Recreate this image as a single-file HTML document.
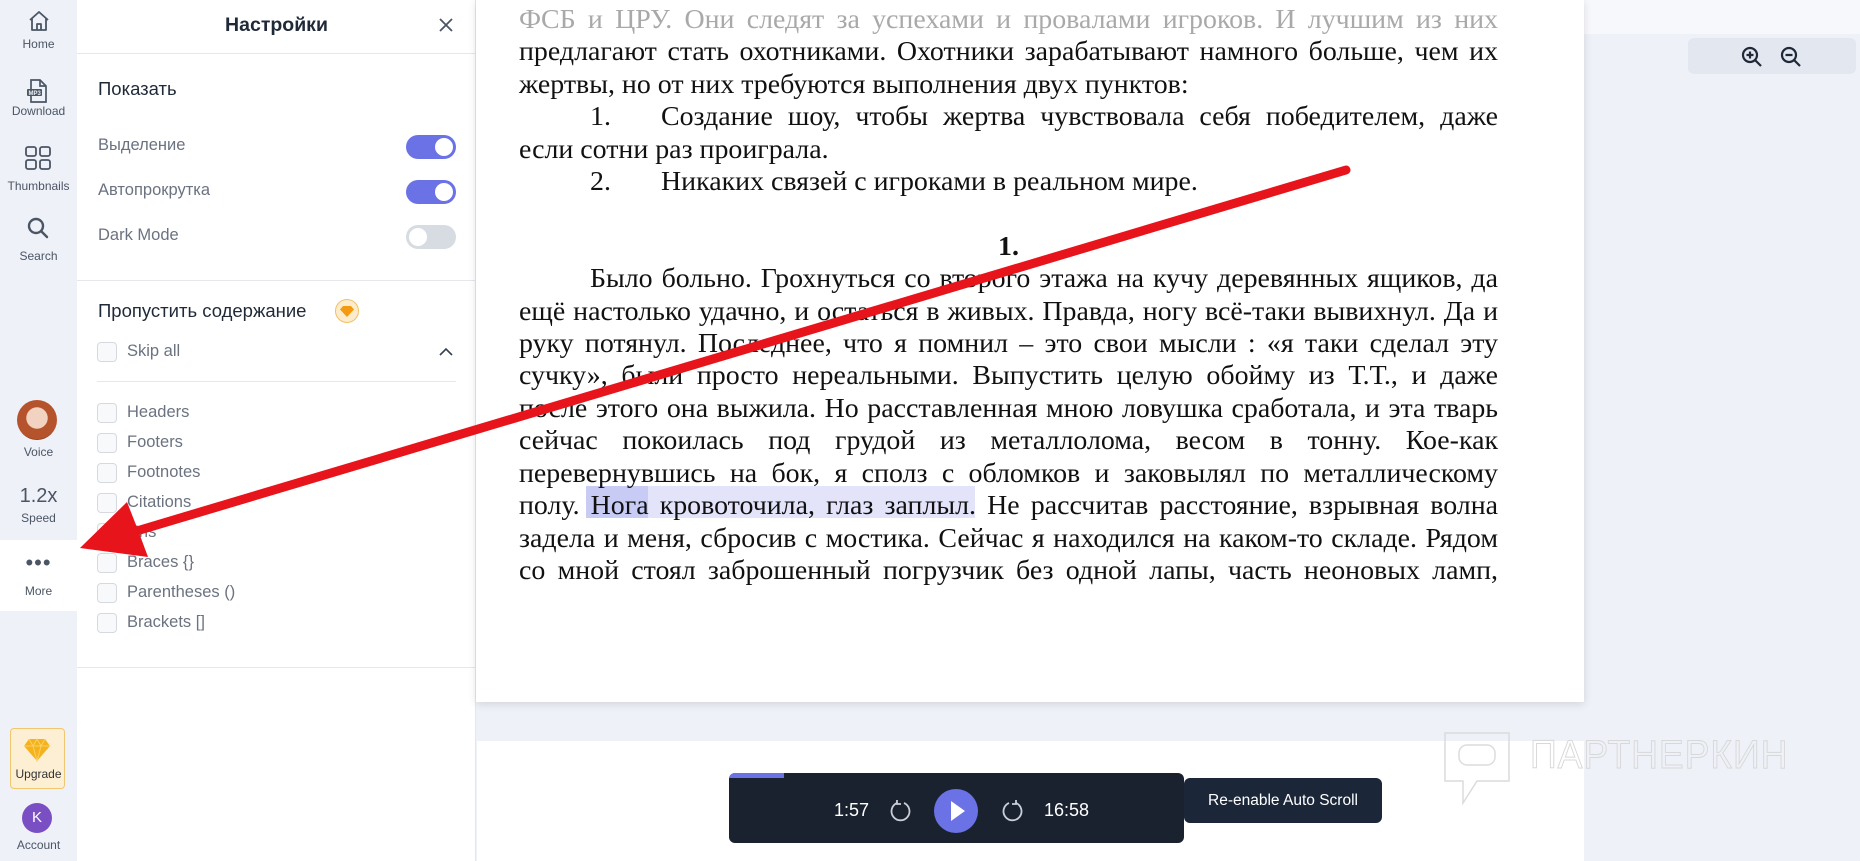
<!DOCTYPE html>
<html><head><meta charset="utf-8">
<style>
*{margin:0;padding:0;box-sizing:border-box}
body{width:1860px;height:861px;overflow:hidden;background:#eef1f7;font-family:"Liberation Sans",sans-serif;position:relative}
.abs{position:absolute}
#side{left:0;top:0;width:77px;height:861px;background:#eef1f8}
.si{position:absolute;left:0;width:77px;text-align:center;font-size:12px;color:#4b5563}
#panel{left:77px;top:0;width:399px;height:861px;background:#fff;border-right:1px solid #e5e7eb}
.lbl{position:absolute;left:98px;font-size:16.5px;color:#6b7280}
.tg{position:absolute;left:406px;width:50px;height:24px;border-radius:12px;background:#6a72e6}
.tg::after{content:"";position:absolute;right:3px;top:3px;width:18px;height:18px;border-radius:50%;background:#fff}
.tg.off{background:#d7dbe2}.tg.off::after{right:auto;left:3px}
.cb{position:absolute;left:97px;width:20px;height:20px;border:1px solid #d6d9df;border-radius:4px;background:#f8f9fb}
.ci{position:absolute;left:127px;font-size:16.5px;color:#6b7280}
#page{left:476px;top:0;width:1108px;height:702px;background:#fff;box-shadow:0 2px 8px rgba(0,0,0,.12)}
#txt{position:absolute;left:43px;top:4px;width:979px;font-family:"Liberation Serif",serif;font-size:27.9px;line-height:32.4px;color:#111}
.j{text-align:justify;text-align-last:justify;display:block}
.l{display:block;white-space:nowrap}
</style></head><body>
<div class="abs" style="left:1584px;top:0;width:276px;height:34px;background:#f7f8fb"></div>
<div id="side" class="abs">
 <svg class="abs" style="left:27px;top:9px" width="24" height="24" viewBox="0 0 24 24" fill="none" stroke="#4b5563" stroke-width="1.8" stroke-linejoin="round"><path d="M3 11L12 3l9 8M5 9.5V21h14V9.5"/><path d="M10 21v-6h4v6"/></svg>
 <div class="si" style="top:37px">Home</div>
 <svg class="abs" style="left:25px;top:77px" width="26" height="28" viewBox="0 0 26 28" fill="none" stroke="#4b5563" stroke-width="1.7"><path d="M6 3h9l6 6v16H6z"/><path d="M15 3v6h6"/><rect x="2" y="12" width="15" height="7" fill="#4b5563" stroke="none" rx="1"/><text x="3.5" y="18" font-size="6" fill="#eef1f8" stroke="none" font-family="Liberation Sans" font-weight="bold">MP3</text></svg>
 <div class="si" style="top:104px">Download</div>
 <svg class="abs" style="left:25px;top:146px" width="26" height="24" viewBox="0 0 26 24" fill="none" stroke="#4b5563" stroke-width="1.8"><rect x="1" y="1" width="10" height="9" rx="2"/><rect x="15" y="1" width="10" height="9" rx="2"/><rect x="1" y="14" width="10" height="9" rx="2"/><rect x="15" y="14" width="10" height="9" rx="2"/></svg>
 <div class="si" style="top:179px">Thumbnails</div>
 <svg class="abs" style="left:26px;top:216px" width="24" height="24" viewBox="0 0 24 24" fill="none" stroke="#4b5563" stroke-width="2.4"><circle cx="10" cy="10" r="7"/><path d="M15 15l6 6" stroke-linecap="round"/></svg>
 <div class="si" style="top:249px">Search</div>
 <div class="abs" style="left:17px;top:400px;width:40px;height:40px;border-radius:50%;background:radial-gradient(circle at 50% 45%,#f2d2c0 0 35%,#b5542c 37% 70%,#8a3a1c 72%)"></div>
 <div class="si" style="top:445px">Voice</div>
 <div class="si" style="top:485px;font-size:20px;color:#4b5563">1.2x</div>
 <div class="si" style="top:511px">Speed</div>
 <div class="abs" style="left:0;top:540px;width:77px;height:71px;background:#fff"></div>
 <div class="si" style="top:550px;font-size:22px;letter-spacing:1px;color:#4b5563">•••</div>
 <div class="si" style="top:584px">More</div>
 <div class="abs" style="left:10px;top:728px;width:55px;height:61px;background:#fdefd3;border:1px solid #f0c670;border-radius:4px"></div>
 <svg class="abs" style="left:23px;top:738px" width="28" height="24" viewBox="0 0 28 24"><path d="M6 1h16l5 7-13 15L1 8z" fill="#f6b21b"/><path d="M1 8h26M6 1l4 7 4-7 4 7 4-7M10 8l4 15 4-15" stroke="#fbd06a" stroke-width="1" fill="none"/></svg>
 <div class="si" style="top:767px;font-size:12px;color:#333">Upgrade</div>
 <div class="abs" style="left:22px;top:803px;width:30px;height:30px;border-radius:50%;background:#7b4fc4;color:#fff;font-size:15px;text-align:center;line-height:30px">K</div>
 <div class="si" style="top:838px">Account</div>
</div>
<div id="panel" class="abs"></div>
<div class="abs" style="left:77px;top:0;width:399px;height:54px;border-bottom:1px solid #e5e7eb;text-align:center;font-size:19.5px;font-weight:bold;color:#1f2937;line-height:50px">Настройки</div>
<svg class="abs" style="left:438px;top:17px" width="16" height="16" viewBox="0 0 16 16" stroke="#4b5563" stroke-width="1.8"><path d="M2 2l12 12M14 2L2 14"/></svg>
<div class="abs" style="left:98px;top:78px;font-size:18.5px;color:#1f2937">Показать</div>
<div class="lbl" style="top:136px">Выделение</div><div class="tg" style="top:135px"></div>
<div class="lbl" style="top:181px">Автопрокрутка</div><div class="tg" style="top:180px"></div>
<div class="lbl" style="top:226px">Dark Mode</div><div class="tg off" style="top:225px"></div>
<div class="abs" style="left:77px;top:280px;width:399px;height:1px;background:#e5e7eb"></div>
<div class="abs" style="left:98px;top:300px;font-size:18.5px;color:#1f2937">Пропустить содержание</div>
<div class="abs" style="left:335px;top:299px;width:24px;height:24px;border-radius:50%;background:#fdeccc;border:1.5px solid #f1c064"></div>
<svg class="abs" style="left:340px;top:306px" width="14" height="11" viewBox="0 0 14 11"><path d="M3 0h8l3 3.5L7 11 0 3.5z" fill="#f39a12"/></svg>
<div class="cb" style="top:342px"></div><div class="ci" style="top:342px">Skip all</div>
<svg class="abs" style="left:439px;top:347px" width="14" height="9" viewBox="0 0 14 9" fill="none" stroke="#374151" stroke-width="1.6"><path d="M1 8l6-6 6 6"/></svg>
<div class="abs" style="left:97px;top:381px;width:359px;height:1px;background:#e5e7eb"></div>
<div class="cb" style="top:403px"></div><div class="ci" style="top:403px">Headers</div>
<div class="cb" style="top:433px"></div><div class="ci" style="top:433px">Footers</div>
<div class="cb" style="top:463px"></div><div class="ci" style="top:463px">Footnotes</div>
<div class="cb" style="top:493px"></div><div class="ci" style="top:493px">Citations</div>
<div class="cb" style="top:523px"></div><div class="ci" style="top:523px">Urls</div>
<div class="cb" style="top:553px"></div><div class="ci" style="top:553px">Braces {}</div>
<div class="cb" style="top:583px"></div><div class="ci" style="top:583px">Parentheses ()</div>
<div class="cb" style="top:613px"></div><div class="ci" style="top:613px">Brackets []</div>
<div class="abs" style="left:77px;top:667px;width:399px;height:1px;background:#e5e7eb"></div>

<div id="page" class="abs">
 <div class="abs" style="left:110px;top:486px;width:389px;height:32px;background:#e3e4fa"></div>
 <div class="abs" style="left:110px;top:486px;width:62px;height:32px;background:#c8ccf4"></div>
 <div id="txt">
  <span class="l j" style="color:#a9a9a9">ФСБ и ЦРУ. Они следят за успехами и провалами игроков. И лучшим из них</span>
  <span class="l j">предлагают стать охотниками. Охотники зарабатывают намного больше, чем их</span>
  <span class="l">жертвы, но от них требуются выполнения двух пунктов:</span>
  <span class="l j" style="padding-left:71px"><span style="display:inline-block;width:71px;text-align:left">1.</span>Создание шоу, чтобы жертва чувствовала себя победителем, даже</span>
  <span class="l">если сотни раз проиграла.</span>
  <span class="l" style="padding-left:71px"><span style="display:inline-block;width:71px">2.</span>Никаких связей с игроками в реальном мире.</span>
  <span class="l">&nbsp;</span>
  <span class="l" style="text-align:center;font-weight:bold">1.</span>
  <span class="l j" style="padding-left:71px">Было больно. Грохнуться со второго этажа на кучу деревянных ящиков, да</span>
  <span class="l j">ещё настолько удачно, и остаться в живых. Правда, ногу всё-таки вывихнул. Да и</span>
  <span class="l j">руку потянул. Последнее, что я помнил – это свои мысли : «я таки сделал эту</span>
  <span class="l j">сучку», были просто нереальными. Выпустить целую обойму из Т.Т., и даже</span>
  <span class="l j">после этого она выжила. Но расставленная мною ловушка сработала, и эта тварь</span>
  <span class="l j">сейчас покоилась под грудой из металлолома, весом в тонну. Кое-как</span>
  <span class="l j">перевернувшись на бок, я сполз с обломков и заковылял по металлическому</span>
  <span class="l j">полу. Нога кровоточила, глаз заплыл. Не рассчитав расстояние, взрывная волна</span>
  <span class="l j">задела и меня, сбросив с мостика. Сейчас я находился на каком-то складе. Рядом</span>
  <span class="l j">со мной стоял заброшенный погрузчик без одной лапы, часть неоновых ламп,</span>
 </div>
</div>
<div class="abs" style="left:477px;top:741px;width:1107px;height:120px;background:#fff"></div>

<div class="abs" style="left:1688px;top:38px;width:168px;height:36px;background:#e2e7f0;border-radius:6px"></div>
<svg class="abs" style="left:1740px;top:45px" width="24" height="24" viewBox="0 0 24 24" fill="none" stroke="#1f2937" stroke-width="2.2"><circle cx="10" cy="10" r="7"/><path d="M15 15l6 6M10 6.5v7M6.5 10h7"/></svg>
<svg class="abs" style="left:1779px;top:45px" width="24" height="24" viewBox="0 0 24 24" fill="none" stroke="#1f2937" stroke-width="2.2"><circle cx="10" cy="10" r="7"/><path d="M15 15l6 6M6.5 10h7"/></svg>

<svg class="abs" style="left:1441px;top:729px" width="72" height="78" viewBox="0 0 72 78" fill="none" stroke="#dcdcdc" stroke-width="1.5"><path d="M4 4h64v48H36L22 74V52H4z"/><rect x="18" y="16" width="36" height="20" rx="8"/></svg>
<div class="abs" style="left:1530px;top:733px;font-size:40px;color:transparent;-webkit-text-stroke:1px #d8d8d8;letter-spacing:1px;transform:scaleX(.93);transform-origin:left">ПАРТНЕРКИН</div>

<div class="abs" style="left:729px;top:773px;width:455px;height:70px;background:#1a2230;border-radius:6px;overflow:hidden"><div style="width:55px;height:5px;background:#6a72e6"></div></div>
<div class="abs" style="left:834px;top:800px;font-size:18px;color:#fff">1:57</div>
<svg class="abs" style="left:889px;top:798px" width="24" height="26" viewBox="0 0 24 26" fill="none" stroke="#c9ced8" stroke-width="1.8"><path d="M8 5A9 9 0 1 0 15 5"/><path d="M8 2v4H12"/></svg>
<div class="abs" style="left:934px;top:789px;width:44px;height:44px;border-radius:50%;background:#6a72e6"></div>
<svg class="abs" style="left:950px;top:800px" width="16" height="22" viewBox="0 0 16 22"><path d="M1 1l14 10L1 21z" fill="#fff"/></svg>
<svg class="abs" style="left:1000px;top:798px" width="24" height="26" viewBox="0 0 24 26" fill="none" stroke="#c9ced8" stroke-width="1.8"><path d="M16 5A9 9 0 1 1 9 5"/><path d="M16 2v4H12"/></svg>
<div class="abs" style="left:1044px;top:800px;font-size:18px;color:#fff">16:58</div>
<div class="abs" style="left:1184px;top:778px;width:198px;height:45px;background:#1b2739;border-radius:6px;color:#fff;font-size:15.5px;text-align:center;line-height:45px">Re-enable Auto Scroll</div>

<svg class="abs" style="left:0;top:0" width="1860" height="861">
 <line x1="1346" y1="170" x2="130" y2="533" stroke="#e8141b" stroke-width="9" stroke-linecap="round"/>
 <path d="M80 548L127 502L138 530L148 557Z" fill="#e8141b"/>
</svg>
</body></html>
